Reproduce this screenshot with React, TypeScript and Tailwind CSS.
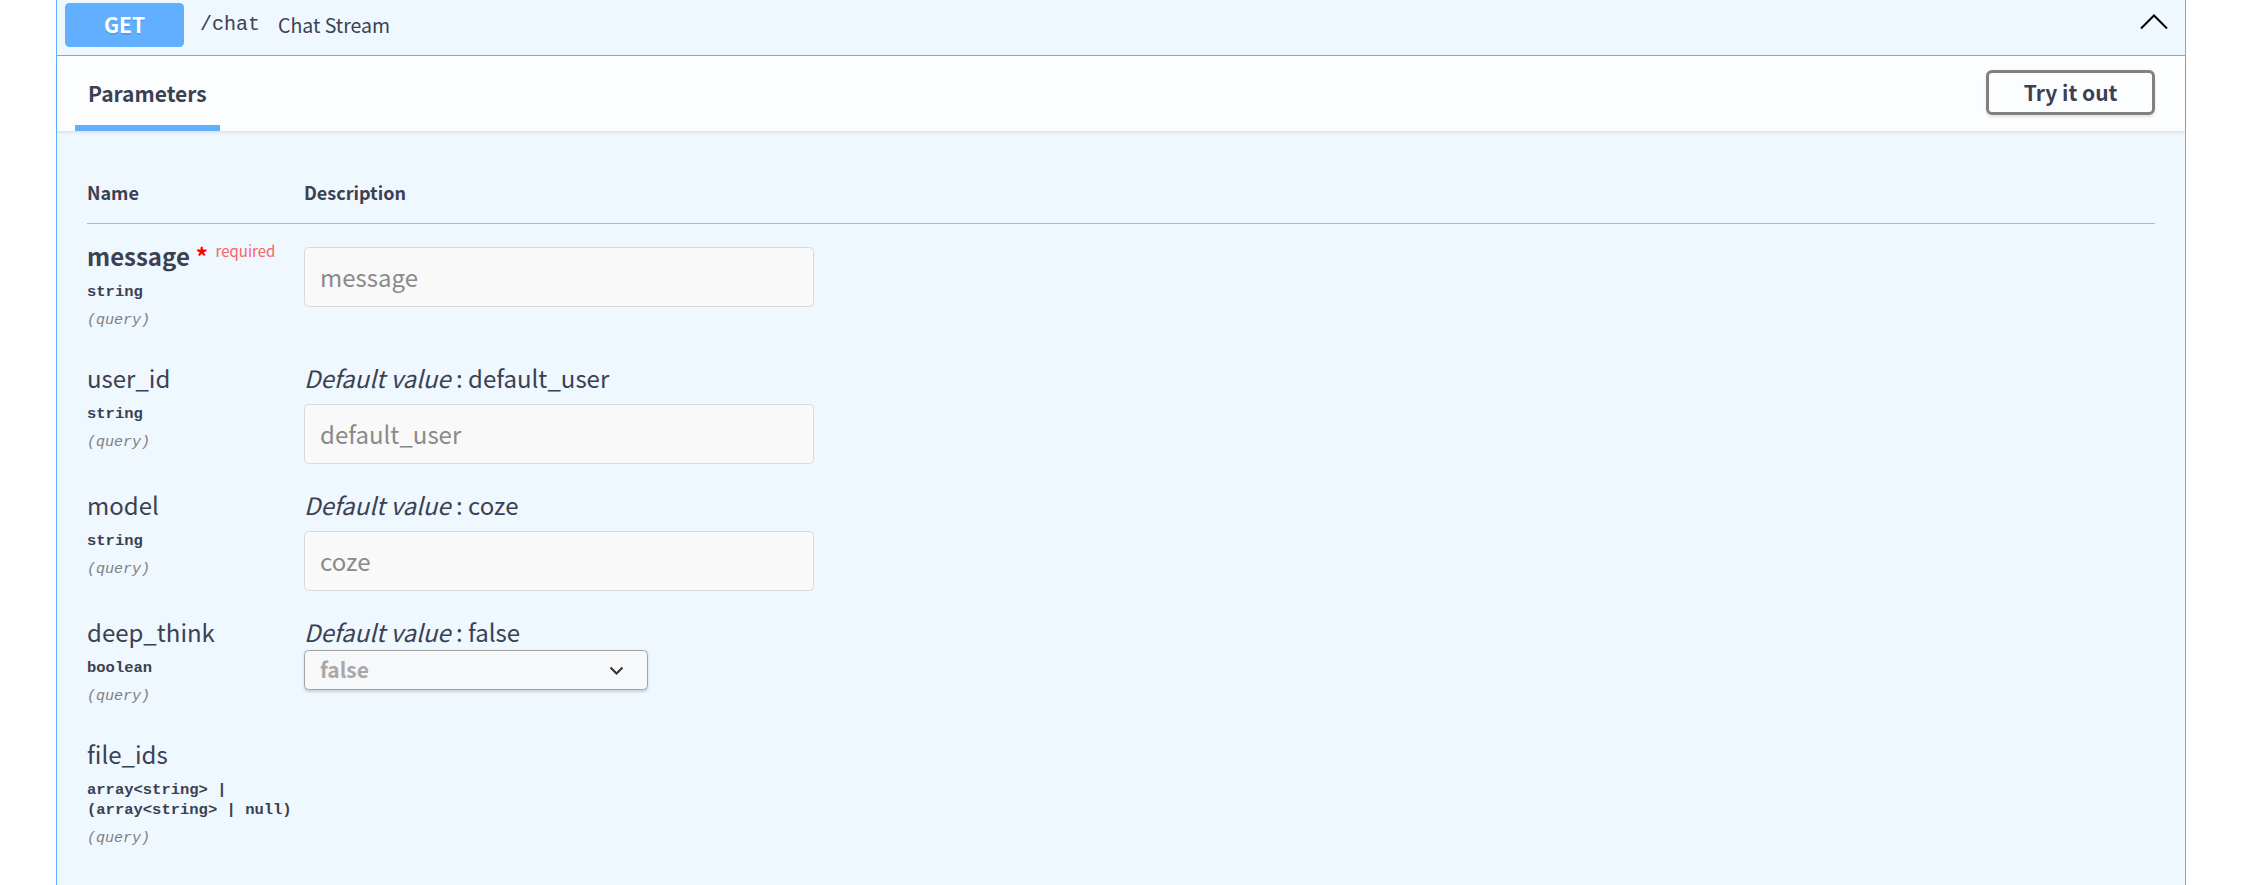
import React from "react";

type RowProps = {
  name: string;
  required?: boolean;
  types: string[];
  defaultValue?: string;
  control?: React.ReactNode;
  first?: boolean;
};

function TextInput({ placeholder, className }: { placeholder: string; className: string }) {
  return (
    <div
      className={
        "flex h-[60px] w-[510px] items-center rounded-[4.5px] border border-[#d9d9d9] bg-[#f9f9f9] pl-[15px] text-[24px] text-[#8a8a8a] " +
        className
      }
    >
      {placeholder}
    </div>
  );
}

function Row({ name, required, types, defaultValue, control }: RowProps) {
  return (
    <div className="flex items-start pb-[26.5px]">
      <div className="w-[217px] shrink-0 pb-[6px]">
        <div className="h-[30px] whitespace-nowrap text-[24px] leading-[30px]">
          <span className={required ? "font-bold" : ""}>{name}</span>
          {required && (
            <>
              <span className="ml-[6px] font-bold text-[#ff0000]">*</span>
              <span className="relative top-[-9px] pl-[7.5px] text-[15px] text-[#f96366]">required</span>
            </>
          )}
        </div>
        <div className="mt-[10.5px] font-['Liberation_Mono',monospace] text-[15.5px] font-semibold leading-[20px]">
          {types.map((t) => (
            <div key={t} className="whitespace-pre">
              {t}
            </div>
          ))}
        </div>
        <div className="mt-[9px] font-['Liberation_Mono',monospace] text-[15px] italic leading-[20px] text-[#808080]">
          (query)
        </div>
      </div>
      <div className="flex flex-col">
        {defaultValue !== undefined && (
          <div className="h-[30px] whitespace-nowrap text-[24px] leading-[30px]">
            <i>Default value</i> : {defaultValue}
          </div>
        )}
        {control}
      </div>
    </div>
  );
}

export default function App() {
  return (
    <div className="h-[885px] w-[2260px] overflow-hidden bg-white font-['Noto_Sans_CJK_SC','Noto_Sans',sans-serif] text-[#3b4151]">
      <div className="ml-[56px] mt-[-4px] h-[1000px] w-[2130px] border-x border-[#61affe] bg-[#eff7ff]">
        {/* summary */}
        <div className="flex items-center border-b border-[#61affe] pb-[8px] pl-[8px] pr-[17px] pt-[7px]">
          <div className="flex h-[44px] w-[119px] items-center justify-center rounded-[4.5px] bg-[#61affe] text-[21px] font-bold text-white [text-shadow:0_1.5px_0_rgba(0,0,0,0.1)]">
            GET
          </div>
          <span className="ml-[16px] font-['Liberation_Mono',monospace] text-[20px]">/chat</span>
          <span className="ml-[18px] text-[19.5px]">Chat Stream</span>
          <svg className="mb-[6px] ml-auto" width="28" height="16" viewBox="0 0 28 16">
            <path d="M1 14.5 L14 1.5 L27 14.5" fill="none" stroke="#000" strokeWidth="2" />
          </svg>
        </div>

        {/* tab header */}
        <div className="relative flex h-[75px] items-start justify-between bg-[#fcfdff] px-[18px] shadow-[0_1.5px_3px_rgba(0,0,0,0.1)]">
          <div className="flex h-full flex-col px-[13px] pt-[23.5px]">
            <span className="text-[21px] font-bold leading-[26px]">Parameters</span>
            <div className="-mx-[13px] mt-auto h-[6px] bg-[#61affe]" />
          </div>
          <div className="mr-[12px] mt-[14.3px] flex h-[45px] w-[169px] items-center justify-center rounded-[6px] border-[3px] border-[#808080] bg-transparent text-[21px] font-bold shadow-[0_1.5px_3px_rgba(0,0,0,0.1)]">
            Try it out
          </div>
        </div>

        {/* table */}
        <div className="px-[30px] pt-[49px]">
          <div className="flex border-b border-[#b3b9c3] pb-[19px] text-[18px] font-bold leading-[24px]">
            <div className="w-[217px]">Name</div>
            <div>Description</div>
          </div>
          <div className="pt-[17px]">
            <Row
              name="message"
              required
              types={["string"]}
              control={<TextInput placeholder="message" className="mt-[5.5px]" />}
            />
            <Row
              name="user_id"
              types={["string"]}
              defaultValue="default_user"
              control={<TextInput placeholder="default_user" className="mt-[10.5px]" />}
            />
            <Row
              name="model"
              types={["string"]}
              defaultValue="coze"
              control={<TextInput placeholder="coze" className="mt-[10.5px]" />}
            />
            <Row
              name="deep_think"
              types={["boolean"]}
              defaultValue="false"
              control={
                <div className="mt-[3px] flex h-[40px] w-[344px] items-center justify-between rounded-[4.5px] border border-[#a3a3a3] bg-[#f7f8fa] pl-[15px] pr-[23px] shadow-[0_1.5px_3px_rgba(0,0,0,0.15)]">
                  <span className="text-[21px] font-bold text-[#a8a8a8]">false</span>
                  <svg width="15" height="9" viewBox="0 0 15 9">
                    <path d="M1.5 1.5 L7.5 7.5 L13.5 1.5" fill="none" stroke="#333" strokeWidth="2" />
                  </svg>
                </div>
              }
            />
            <Row name="file_ids" types={["array<string> |", "(array<string> | null)"]} />
          </div>
        </div>
      </div>
    </div>
  );
}
